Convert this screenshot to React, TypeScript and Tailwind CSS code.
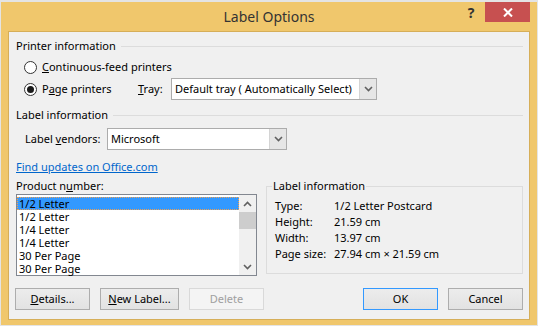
import React from 'react';

const Chevron: React.FC<{ up?: boolean }> = ({ up }) => (
  <svg width="9" height="6" viewBox="0 0 9 6" className="block">
    <path
      d={up ? 'M1 5 L4.5 1.5 L8 5' : 'M1 1 L4.5 4.5 L8 1'}
      fill="none"
      stroke="#606060"
      strokeWidth="1.6"
    />
  </svg>
);

const Radio: React.FC<{ checked?: boolean }> = ({ checked }) => (
  <span className="w-[13px] h-[13px] rounded-full border border-[#333] bg-white flex items-center justify-center shrink-0">
    {checked && <span className="w-[7px] h-[7px] rounded-full bg-[#1a1a1a]" />}
  </span>
);

const Section: React.FC<{ title: string }> = ({ title }) => (
  <div className="flex items-center h-4">
    <span>{title}</span>
    <div className="flex-1 h-px bg-[#dcdcdc] ml-[5px]" />
  </div>
);

const Combo: React.FC<{ value: string; className: string }> = ({ value, className }) => (
  <div className={`flex h-[22px] border border-[#acacac] bg-white ${className}`}>
    <span className="flex-1 pl-[3px] leading-[20px] whitespace-nowrap">{value}</span>
    <span className="w-[17px] bg-[#e6e6e6] border-l border-[#d4d4d4] flex items-center justify-center">
      <Chevron />
    </span>
  </div>
);

const Btn: React.FC<{ children: React.ReactNode; className?: string; disabled?: boolean; primary?: boolean }> = ({
  children,
  className = '',
  disabled,
  primary,
}) => {
  const look = disabled
    ? 'border-[#d9d9d9] bg-[#f4f4f4] text-[#a0a0a0]'
    : primary
    ? 'border-[#3399ff] bg-gradient-to-b from-[#ececec] to-[#e2e2e2]'
    : 'border-[#adadad] bg-gradient-to-b from-[#ececec] to-[#e2e2e2]';
  return (
    <div className={`h-[22px] border flex items-center justify-center ${look} ${className}`}>{children}</div>
  );
};

const products = ['1/2 Letter', '1/2 Letter', '1/4 Letter', '1/4 Letter', '30 Per Page', '30 Per Page'];

const details = [
  ['Type:', '1/2 Letter Postcard'],
  ['Height:', '21.59 cm'],
  ['Width:', '13.97 cm'],
  ['Page size:', '27.94 cm \u00d7 21.59 cm'],
];

export default function App() {
  return (
    <div className="w-[538px] h-[326px] bg-[#e4e4e4] overflow-hidden font-['Noto_Sans',sans-serif] text-[11px] text-black">
      <div className="ml-[1px] mt-[2px] w-[536px] h-[323px] bg-[#f0c76c] flex flex-col px-[7px] pb-[5px]">
        {/* title bar */}
        <div className="h-[29px] grid grid-cols-[1fr_auto_1fr] -mx-[7px] px-[7px]">
          <div />
          <div className="self-center text-[14px] text-[#333] leading-[20px]">Label Options</div>
          <div className="flex justify-end items-start">
            <div className="w-[20px] h-[20px] mr-[4px] flex items-center justify-center text-[14px] font-bold text-[#333]">?</div>
            <div className="w-[45px] h-[20px] bg-[#c75050] flex items-center justify-center">
              <svg width="10" height="9" viewBox="0 0 10 9">
                <path d="M1 0.5 L9 8.5 M9 0.5 L1 8.5" stroke="#fff" strokeWidth="2" />
              </svg>
            </div>
          </div>
        </div>

        {/* client area */}
        <div className="flex-1 flex flex-col bg-[#f0f0f0] border border-[#d6ae58] pl-[7px] pr-[6px] pt-[6px] leading-[16px]">
          <Section title="Printer information" />
          <div className="mt-[2px] h-[22px] flex items-center pl-[8px]">
            <Radio />
            <span className="ml-[5px]">
              <u>C</u>ontinuous-feed printers
            </span>
          </div>
          <div className="h-[22px] flex items-center pl-[8px]">
            <Radio checked />
            <span className="ml-[5px] w-[96px]">
              P<u>a</u>ge printers
            </span>
            <span className="w-[33px]">
              <u>T</u>ray:
            </span>
            <Combo value="Default tray ( Automatically Select)" className="w-[206px]" />
          </div>

          <div className="mt-[7px]">
            <Section title="Label information" />
          </div>
          <div className="mt-[5px] h-[22px] flex items-center pl-[9px]">
            <span className="w-[82px]">
              Label <u>v</u>endors:
            </span>
            <Combo value="Microsoft" className="w-[180px]" />
          </div>
          <div className="mt-[9px] h-4">
            <span className="text-[#0066cc] underline">Find updates on Office.com</span>
          </div>

          <div className="mt-[3px] flex gap-[9px]">
            <div className="w-[241px] flex flex-col">
              <div className="h-4">
                Product n<u>u</u>mber:
              </div>
              <div className="h-[82px] border border-[#828790] bg-white flex">
                <div className="flex-1 pt-[2px]">
                  {products.map((p, i) => (
                    <div
                      key={i}
                      className={`h-[13px] leading-[13px] pl-[2px] ${
                        i === 0 ? 'bg-[#3399ff] outline outline-1 outline-dotted outline-[#f0a050] -outline-offset-1' : ''
                      }`}
                    >
                      {p}
                    </div>
                  ))}
                </div>
                <div className="w-[17px] bg-[#f0f0f0] flex flex-col">
                  <div className="h-[17px] flex items-center justify-center">
                    <Chevron up />
                  </div>
                  <div className="h-[17px] bg-[#cdcdcd]" />
                  <div className="flex-1" />
                  <div className="h-[17px] flex items-center justify-center">
                    <Chevron />
                  </div>
                </div>
              </div>
            </div>

            <fieldset className="flex-1 h-[96px] border border-[#dcdcdc]">
              <legend className="ml-[5px] px-[1px] leading-[16px]">Label information</legend>
              <div className="pt-[4px] pl-[8px]">
                {details.map(([k, v]) => (
                  <div key={k} className="flex h-4">
                    <span className="w-[59px]">{k}</span>
                    <span>{v}</span>
                  </div>
                ))}
              </div>
            </fieldset>
          </div>

          <div className="mt-[12px] -ml-[1px] flex">
            <Btn className="w-[75px]">
              <span>
                <u>D</u>etails...
              </span>
            </Btn>
            <Btn className="w-[79px] ml-[10px]">
              <span>
                <u>N</u>ew Label...
              </span>
            </Btn>
            <Btn className="w-[75px] ml-[10px]" disabled>
              Delete
            </Btn>
            <div className="flex-1" />
            <Btn className="w-[75px]" primary>
              OK
            </Btn>
            <Btn className="w-[75px] ml-[10px]">Cancel</Btn>
          </div>
        </div>
      </div>
    </div>
  );
}
